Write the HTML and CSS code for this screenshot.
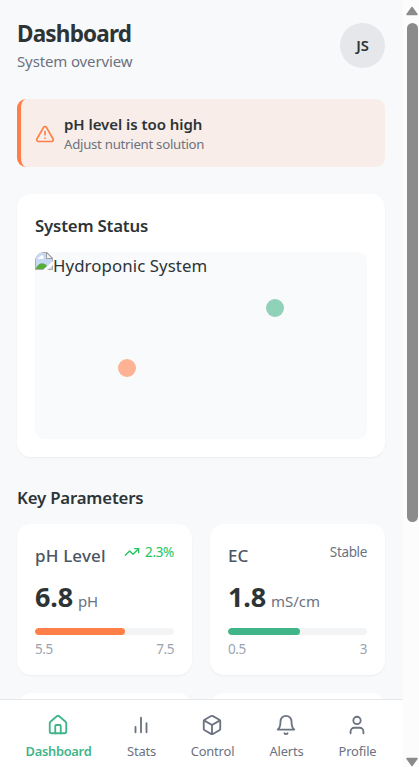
FILE: index.html
```html
<!DOCTYPE html>
<html lang="en">
<head>
<meta charset="utf-8">
<title>Dashboard</title>
<link rel="stylesheet" href="styles.css">
</head>
<body>
<div class="shell">
  <div class="app">
    <main class="content">
      <header class="header">
        <div>
          <h1 class="title"><span>Dashboard</span></h1>
          <p class="subtitle"><span>System overview</span></p>
        </div>
        <div class="avatar"><span>JS</span></div>
      </header>

      <section class="alert">
        <svg class="alert-icon" viewBox="0 0 24 24"><path d="m21.73 18-8-14a2 2 0 0 0-3.48 0l-8 14A2 2 0 0 0 4 21h16a2 2 0 0 0 1.73-3"/><path d="M12 9v4"/><path d="M12 17h.01"/></svg>
        <div>
          <p class="alert-title"><span>pH level is too high</span></p>
          <p class="alert-text"><span>Adjust nutrient solution</span></p>
        </div>
      </section>

      <section class="card status">
        <h2 class="heading status-heading"><span>System Status</span></h2>
        <div class="diagram">
          <svg class="missing" viewBox="0 0 18 18">
            <path d="M0 0h12l6 6v12H0z" fill="#a9adb2"/>
            <path d="M1 1h10.500l5.500 5.500V17H1z" fill="#c7d8f5"/>
            <path d="M3 7c0-2 3-2 3.500-4C9 3 9 6 8 7z" fill="#fff"/>
            <path d="M1 17v-1c3-6 8-6 11-2l-3 3z" fill="#57ad38"/>
            <path d="M11.500 1v5.500H17z" fill="#f6f6f6" stroke="#999" stroke-width="1"/>
            <path d="M18 9 8 18h4l6-5z" fill="#fff"/>
          </svg><span class="missing-text">Hydroponic System</span>
          <i class="dot dot-green"></i>
          <i class="dot dot-orange"></i>
        </div>
      </section>

      <h2 class="heading params-heading"><span>Key Parameters</span></h2>
      <section class="grid">
        <article class="card param">
          <div class="param-head">
            <h3 class="param-name">pH Level</h3>
            <div class="trend up"><svg class="trend-icon" viewBox="0 0 24 24"><path d="M22 7 13.500 15.500 8.500 10.500 2 17"/><path d="M16 7h6v6"/></svg><span>2.3%</span></div>
          </div>
          <div class="reading"><span class="value">6.8</span><span class="unit">pH</span></div>
          <div class="track"><div class="fill orange" style="width:65%"></div></div>
          <div class="range"><span>5.5</span><span>7.5</span></div>
        </article>
        <article class="card param">
          <div class="param-head">
            <h3 class="param-name">EC</h3>
            <div class="trend stable"><span>Stable</span></div>
          </div>
          <div class="reading"><span class="value">1.8</span><span class="unit">mS/cm</span></div>
          <div class="track"><div class="fill green" style="width:52%"></div></div>
          <div class="range"><span>0.5</span><span>3</span></div>
        </article>
        <article class="card param"></article>
        <article class="card param"></article>
      </section>
    </main>

    <nav class="nav">
      <a class="item active"><svg viewBox="0 0 24 24"><path d="M15 21v-8a1 1 0 0 0-1-1h-4a1 1 0 0 0-1 1v8"/><path d="M3 10a2 2 0 0 1 .709-1.528l7-5.999a2 2 0 0 1 2.582 0l7 5.999A2 2 0 0 1 21 10v9a2 2 0 0 1-2 2H5a2 2 0 0 1-2-2z"/></svg><span>Dashboard</span></a>
      <a class="item stats"><svg viewBox="0 0 24 24"><path d="M18 20V10M12 20V4M6 20v-6"/></svg><span>Stats</span></a>
      <a class="item control"><svg viewBox="0 0 24 24"><path d="M21 8a2 2 0 0 0-1-1.730l-7-4a2 2 0 0 0-2 0l-7 4A2 2 0 0 0 3 8v8a2 2 0 0 0 1 1.730l7 4a2 2 0 0 0 2 0l7-4A2 2 0 0 0 21 16Z"/><path d="m3.300 7 8.700 5 8.700-5M12 22V12"/></svg><span>Control</span></a>
      <a class="item alerts"><svg viewBox="0 0 24 24"><path d="M6 8a6 6 0 0 1 12 0c0 7 3 9 3 9H3s3-2 3-9"/><path d="M10.300 21a1.940 1.940 0 0 0 3.400 0"/></svg><span>Alerts</span></a>
      <a class="item profile"><svg viewBox="0 0 24 24"><path d="M19 21v-2a4 4 0 0 0-4-4H9a4 4 0 0 0-4 4v2"/><circle cx="12" cy="7" r="4"/></svg><span>Profile</span></a>
    </nav>
  </div>

  <div class="scrollbar">
    <svg class="arrow" viewBox="0 0 14 10"><path d="M7 1.500 12 8.500H2z"/></svg>
    <div class="thumb"></div>
    <svg class="arrow down" viewBox="0 0 14 10"><path d="M2 1.500h10L7 8.500z"/></svg>
  </div>
</div>
</body>
</html>
```
FILE: styles.css
```css
* { box-sizing: border-box; margin: 0; padding: 0; }
body {
  font-family: "Noto Sans", "Open Sans", sans-serif;
  color: #2d3436;
  background: #f8f9fb;
  overflow: hidden;
}
span, h3 { white-space: nowrap; }
svg { display: block; flex: none; fill: none; stroke: currentColor; stroke-width: 2; stroke-linecap: round; stroke-linejoin: round; }
.shell { display: flex; height: 767px; }
.app { width: 403px; height: 767px; display: flex; flex-direction: column; overflow: hidden; }
.content { flex: 1; min-height: 0; overflow: hidden; padding: 18px 18px 0 17px; }

.header { display: flex; justify-content: space-between; align-items: center; height: 54px; }
.title { font-size: 22.500px; line-height: 31px; font-weight: 700; letter-spacing: -0.8px; }
.subtitle { font-size: 15px; line-height: 24px; color: #6b7280; letter-spacing: -0.13px; }
.avatar { width: 45px; height: 45px; border-radius: 50%; background: #e5e7eb; display: flex; align-items: center; justify-content: center; font-size: 14.800px; font-weight: 600; }

.alert { margin-top: 27px; height: 68px; display: flex; align-items: center; padding: 1px 0 0 14px; gap: 9px; background: #f8ede8; border-left: 4px solid #ff7f48; border-radius: 9px; }
.alert-icon { width: 20px; height: 20px; color: #ff7f48; }
.alert-title { font-size: 15px; line-height: 21px; font-weight: 600; letter-spacing: -0.05px; }
.alert-text { font-size: 13.200px; line-height: 19px; color: #6b7280; letter-spacing: -0.26px; }

.card { background: #fff; border-radius: 14px; box-shadow: 0 1px 2px rgba(0, 0, 0, 0.05); }
.status { margin-top: 27px; height: 263px; padding: 18px; }
.heading { font-size: 16.800px; line-height: 27px; font-weight: 600; letter-spacing: -0.18px; }
.status-heading { margin-bottom: 13px; }
.diagram { position: relative; height: 187px; display: flex; align-items: flex-start; border-radius: 9px; background: #f9fafb; overflow: hidden; }
.missing { width: 18px; height: 18px; stroke: none; }
.missing-text { font-size: 16.800px; line-height: 27px; letter-spacing: 0.1px; }
.dot { position: absolute; width: 18px; height: 18px; border-radius: 50%; opacity: 0.58; }
.dot-green { top: 25%; right: 25%; background: #41b58a; }
.dot-orange { left: 25%; bottom: 33.300%; background: #ff7f48; }
.params-heading { margin-top: 27px; margin-bottom: 13px; }

.grid { display: grid; grid-template-columns: 175px 175px; gap: 18px; }
.param { height: 151px; padding: 18px; }
.param-head { display: flex; justify-content: space-between; height: 27px; }
.param-name { font-size: 17px; line-height: 27px; font-weight: 500; color: #4b5563; letter-spacing: 0.15px; }
.trend { display: flex; align-items: center; height: 20px; font-size: 13.500px; letter-spacing: -0.35px; color: #6b7280; }
.trend.up { color: #22c55e; }
.trend-icon { width: 16px; height: 16px; margin-right: 5px; }
.reading { display: flex; align-items: baseline; height: 36px; line-height: 36px; margin-top: 10px; }
.value { font-size: 27px; font-weight: 700; letter-spacing: -0.2px; }
.unit { margin-left: 5px; font-size: 15px; color: #6b7280; }
.track { height: 7px; margin-top: 13px; border-radius: 4px; background: #f3f4f6; overflow: hidden; }
.fill { height: 100%; border-radius: 4px; }
.orange { background: #ff7f48; }
.green { background: #41b58a; }
.range { display: flex; justify-content: space-between; margin-top: 5px; font-size: 13.500px; line-height: 18px; letter-spacing: -0.4px; color: #9ca3af; }

.nav { height: 68px; flex: none; display: flex; padding-left: 17px; background: #fff; border-top: 1px solid #e5e7eb; }
.item { width: 83px; padding-top: 14px; display: flex; flex-direction: column; align-items: center; gap: 6px; font-size: 12.900px; line-height: 18px; letter-spacing: -0.15px; color: #6b7280; }
.item svg { width: 22px; height: 22px; margin-left: -1px; }
.active { color: #41b58a; font-weight: 600; letter-spacing: -0.3px; }
.control { width: 59px; }
.alerts { width: 89px; }
.profile { width: 53px; }

.scrollbar { width: 16px; height: 767px; padding: 6px 1px 0 4px; background: #fcfcfc; display: flex; flex-direction: column; }
.arrow { width: 14px; height: 10px; margin-left: -2px; color: #8b8b8b; fill: currentColor; stroke-width: 1.500; }
.thumb { height: 499px; margin-top: 7px; border-radius: 6px; background: #8b8b8b; }
.down { margin-top: auto; }
```
